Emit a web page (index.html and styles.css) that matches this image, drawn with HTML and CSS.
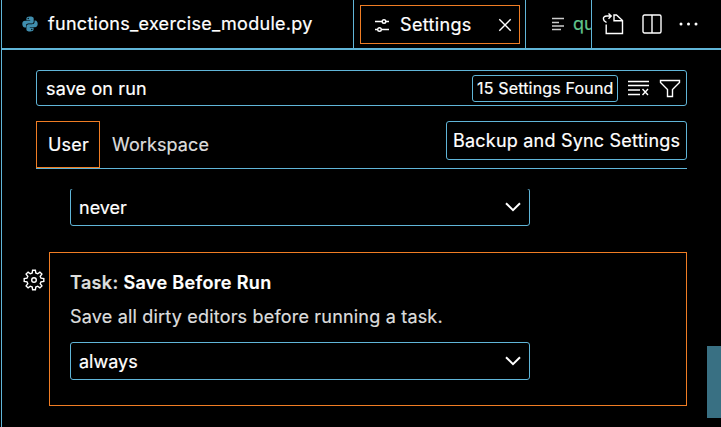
FILE: index.html
```html
<!DOCTYPE html>
<html lang="en">
<head>
<meta charset="utf-8">
<title>Settings</title>
<link rel="stylesheet" href="styles.css">
</head>
<body>
<div class="editor">
  <header class="tabbar">
    <div class="tab tab-file">
      <svg class="python" viewBox="0 0 16 16" width="16" height="16"><path d="M7.800.5C5.700.5 4.400 1.200 4.400 2.500V4.300H8.200V4.800H3C1.400 4.800.3 6 .3 8s1.100 3.400 2.500 3.400H4V9.700C4 8.400 5.100 7.500 6.400 7.500H9.700C10.900 7.500 11.700 6.500 11.700 5.400V2.500C11.700 1.100 10.100.5 7.800.5Z"/><path d="M8.200 15.500c2.100 0 3.400-.7 3.400-2V11.700H7.800V11.200H13c1.600 0 2.700-1.200 2.700-3.200s-1.100-3.400-2.500-3.400H12.500V6.300C12.500 7.600 11.200 8.300 9.900 8.300H6.500C5.300 8.300 4.400 9.300 4.400 10.400v3.100c0 1.400 1.500 2 3.800 2Z"/><circle class="eye" cx="6.200" cy="2.500" r=".7"/><circle class="eye" cx="9.800" cy="13.500" r=".7"/></svg>
      <span class="file-name">functions_exercise_module.py</span>
    </div>
    <div class="tab tab-settings">
      <div class="focus">
        <svg class="line" viewBox="0 0 16 16" width="16" height="16"><path d="M1 4.500H8M12 4.500H15M1 12.500H3.500M7.500 12.500H15"/><circle cx="10" cy="4.500" r="1.800"/><circle cx="5.500" cy="12.500" r="1.800"/></svg>
        <span class="settings-name">Settings</span>
        <svg class="line close" viewBox="0 0 14 14" width="14" height="14"><path d="M1.300 1.300 12.700 12.700M12.700 1.300 1.300 12.700"/></svg>
      </div>
    </div>
    <div class="tab tab-cut">
      <svg class="line lines" viewBox="0 0 12 14" width="12" height="14"><path d="M0 1.500H12M0 5.500H7M0 9H12M0 12.500H9"/></svg>
      <span class="cut-name">qu</span>
    </div>
    <div class="actions">
      <svg class="line" viewBox="0 0 22 22" width="22" height="22"><path d="M4.500 9.500 2.200 7.800C.2 4.500 2.500 3 5 3H9M6.500.5 9.200 3 6.500 5.700M4.200 11.500V20.500H20.500V7.500L14.500 2H12V7.800H20"/></svg>
      <svg class="line split" viewBox="0 0 20 20" width="20" height="20"><rect x="1" y="1" width="18" height="18" rx="1.500"/><path d="M10 1V19"/></svg>
      <svg class="dots" viewBox="0 0 20 4" width="20" height="4"><circle cx="2" cy="2" r="1.500"/><circle cx="9.500" cy="2" r="1.500"/><circle cx="17" cy="2" r="1.500"/></svg>
    </div>
  </header>
  <main class="settings">
    <div class="search">
      <span class="query">save on run</span>
      <span class="badge">15 Settings Found</span>
      <svg class="line clear" viewBox="0 0 22 16" width="22" height="16"><path d="M0 1.500H21M0 5.500H21M0 10H12M0 14.500H12M14.500 9 20 15M20 9 14.500 15"/></svg>
      <svg class="line funnel" viewBox="0 0 22 19" width="22" height="19"><path d="M1.500 1.500H20.500V3.500L13.500 10.500V17.500H8.500V10.500L1.500 3.500Z"/></svg>
    </div>
    <div class="scope">
      <span class="user">User</span>
      <span class="workspace">Workspace</span>
      <span class="sync">Backup and Sync Settings</span>
    </div>
    <div class="list">
      <div class="clip">
        <div class="select"><span class="value">never</span><svg class="chevron" viewBox="0 0 16 10" width="16" height="10"><path d="M1 1.200 8 8.200 15 1.200"/></svg></div>
      </div>
      <div class="row">
        <svg class="line gear" viewBox="0 0 22 22" width="22" height="22"><path d="M9.200 4 9.600 1.200H12.400L12.800 4 14.700 4.800 16.900 3.100 18.900 5.100 17.200 7.300 18 9.200 20.800 9.600V12.400L18 12.800 17.200 14.700 18.900 16.900 16.900 18.900 14.700 17.200 12.800 18 12.400 20.800H9.600L9.200 18 7.300 17.200 5.100 18.900 3.100 16.900 4.800 14.700 4 12.800 1.200 12.400V9.600L4 9.200 4.800 7.300 3.100 5.100 5.100 3.100 7.300 4.800Z"/><circle cx="11" cy="11" r="2.300"/></svg>
        <section class="card">
          <h2 class="title"><span class="category">Task: </span>Save Before Run</h2>
          <p class="description">Save all dirty editors before running a task.</p>
          <div class="select"><span class="value">always</span><svg class="chevron" viewBox="0 0 16 10" width="16" height="10"><path d="M1 1.200 8 8.200 15 1.200"/></svg></div>
        </section>
      </div>
    </div>
  </main>
  <div class="scrollbar"></div>
</div>
</body>
</html>
```
FILE: styles.css
```css
* { box-sizing: border-box; }
body {
  margin: 0;
  background: #000;
  color: #fff;
  font: 18px/24px Inter, "Liberation Sans", sans-serif;
  -webkit-text-stroke: 0.2px currentColor;
  overflow: hidden;
}
span, h2, p { white-space: nowrap; }
svg { display: block; flex: none; }
.line { fill: none; stroke: #fff; stroke-width: 1.4; }
.editor {
  position: relative;
  width: 720px;
  height: 427px;
  margin-left: 1px;
  border-left: 1px solid #60b5d8;
}
.tabbar { display: flex; height: 50px; border-bottom: 2px solid #60b5d8; }
.tab { display: flex; align-items: center; border-right: 1px solid #60b5d8; flex: none; }
.tab-file { width: 352px; padding-left: 20px; gap: 10px; }
.file-name { letter-spacing: 0.29px; }
.python { fill: #408eae; }
.python .eye { fill: #000; }
.tab-settings { width: 172px; padding: 5px 5px 4px 6px; }
.focus {
  display: flex;
  align-items: center;
  width: 160px;
  height: 39px;
  padding: 0 7px 0 13px;
  border: 1px solid #f07d24;
}
.settings-name { margin-left: 10px; letter-spacing: 0.35px; }
.close { margin-left: auto; }
.tab-cut { width: 66px; padding-left: 26px; gap: 9px; overflow: hidden; color: #61c48b; }
.lines { stroke: #ccc; }
.actions { display: flex; align-items: center; padding-left: 10px; }
.split { margin-left: 18px; }
.dots { margin-left: 17px; fill: #fff; }
.settings { padding: 20px 0 0 34px; }
.search {
  display: flex;
  align-items: center;
  width: 651px;
  height: 36px;
  padding: 0 5px 0 9px;
  border: 1px solid #60b5d8;
  border-radius: 3px;
}
.query { padding-top: 1px; letter-spacing: 0.15px; }
.badge {
  width: 146px;
  height: 27px;
  margin-left: auto;
  padding-left: 4px;
  border: 1px solid #60b5d8;
  border-radius: 3px;
  font-size: 16px;
  line-height: 24px;
  letter-spacing: 0.17px;
}
.clear { margin-left: 10px; }
.funnel { margin-left: 9px; }
.scope {
  display: flex;
  width: 651px;
  height: 48px;
  margin-top: 15px;
  border-bottom: 1px solid #60b5d8;
}
.user { width: 64px; height: 47px; padding-left: 11px; border: 1px solid #f07d24; line-height: 45px; letter-spacing: 0.2px; }
.workspace { margin-left: 12px; line-height: 47px; color: #ddd; letter-spacing: 0.1px; }
.sync {
  width: 241px;
  height: 39px;
  margin-left: auto;
  padding-left: 6px;
  border: 1px solid #60b5d8;
  border-radius: 3px;
  line-height: 37px;
  letter-spacing: 0.21px;
}
.list { padding-top: 20px; }
.clip { display: flex; align-items: flex-end; height: 37px; margin-left: 34px; overflow: hidden; }
.select {
  display: flex;
  align-items: center;
  justify-content: space-between;
  flex: none;
  width: 460px;
  height: 38px;
  padding: 0 8px;
  border: 1px solid #60b5d8;
  border-radius: 3px;
}
.value { padding-top: 2px; }
.chevron { fill: none; stroke: #fff; stroke-width: 2; }
.row { display: flex; margin: 26px 0 0 -13px; }
.gear { margin-top: 17px; }
.card { width: 638px; height: 154px; margin-left: 4px; padding: 17px 20px; border: 1px solid #f07d24; }
.title { margin: 0; font-size: 18px; line-height: 26px; font-weight: 600; letter-spacing: 0.35px; }
.category { color: #ddd; }
.description { margin: 8px 0 13px; line-height: 25px; color: #ddd; letter-spacing: 0.19px; }
.scrollbar { position: absolute; right: 0; top: 346px; width: 14px; height: 72px; background: #397083; }
```
